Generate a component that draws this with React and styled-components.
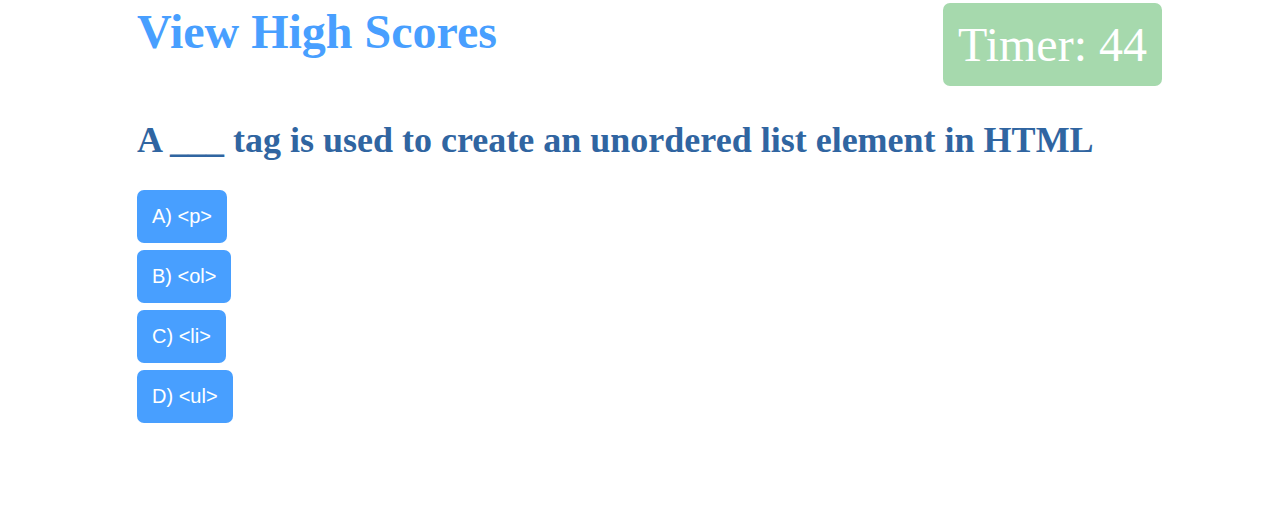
import React from "react";
import styled, { createGlobalStyle } from "styled-components";

const GlobalStyle = createGlobalStyle`
  *, *::before, *::after { box-sizing: border-box; }
  body {
    margin: 0;
    background: #ffffff;
    font-family: "Liberation Serif", "Times New Roman", serif;
  }
`;

const Page = styled.div`
  padding: 3px 108px 24px 137px;
`;

const Header = styled.header`
  display: flex;
  justify-content: space-between;
  align-items: flex-start;
`;

const ScoresLink = styled.a`
  color: #489fff;
  font-size: 48px;
  line-height: 58px;
  font-weight: 700;
  text-decoration: none;
`;

const Timer = styled.div`
  padding: 14px 15px;
  border-radius: 7px;
  background: #a6d9ad;
  color: #ffffff;
  font-size: 48px;
  line-height: 55px;
`;

const Question = styled.h1`
  margin: 32px 0 28px;
  color: #3065a1;
  font-size: 36px;
  line-height: 44px;
  font-weight: 700;
`;

const Answers = styled.div`
  display: flex;
  flex-direction: column;
  align-items: flex-start;
  gap: 7px;
`;

const AnswerButton = styled.button`
  padding: 15px;
  border: 0;
  border-radius: 7px;
  background: #489fff;
  color: #ffffff;
  font-family: "Liberation Sans", Arial, sans-serif;
  font-size: 20px;
  line-height: 23px;
  cursor: pointer;
`;

const answers = ["A) <p>", "B) <ol>", "C) <li>", "D) <ul>"];

export default function App() {
  return (
    <>
      <GlobalStyle />
      <Page>
        <Header>
          <ScoresLink href="#scores">View High Scores</ScoresLink>
          <Timer>Timer: 44</Timer>
        </Header>
        <main>
          <Question>A ___ tag is used to create an unordered list element in HTML</Question>
          <Answers>
            {answers.map((answer) => (
              <AnswerButton key={answer} type="button">{answer}</AnswerButton>
            ))}
          </Answers>
        </main>
      </Page>
    </>
  );
}
